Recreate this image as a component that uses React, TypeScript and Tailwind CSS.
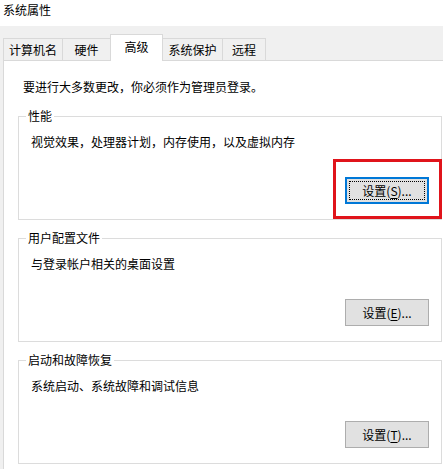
import { ReactNode } from "react";

type Tab = { label: string; width: string; active?: boolean };

const TABS: Tab[] = [
  { label: "计算机名", width: "w-[60px]" },
  { label: "硬件", width: "w-[49px]" },
  { label: "高级", width: "w-[53px]", active: true },
  { label: "系统保护", width: "w-[61px]" },
  { label: "远程", width: "w-[44px]" },
];

function TabStrip() {
  return (
    <div className="flex h-[34px] items-end pl-[3px]">
      {TABS.map((tab, i) =>
        tab.active ? (
          <div
            key={tab.label}
            className={`relative z-10 -mb-px -ml-px flex h-[27px] items-start justify-center border border-b-0 border-[#d9d9d9] bg-white pt-[3px] ${tab.width}`}
          >
            {tab.label}
          </div>
        ) : (
          <div
            key={tab.label}
            className={`flex h-[22px] items-center justify-center border border-b-0 border-[#d9d9d9] bg-[#f0f0f0] ${tab.width} ${
              i > 0 ? "-ml-px" : ""
            }`}
          >
            {tab.label}
          </div>
        )
      )}
    </div>
  );
}

function SettingsButton({
  accessKey,
  focused = false,
}: {
  accessKey: string;
  focused?: boolean;
}) {
  return (
    <div className="relative">
      <button
        className={
          focused
            ? "relative flex h-[27px] w-[84px] items-center justify-center border-2 border-[#0078d7] bg-[#e1e1e1]"
            : "relative flex h-[27px] w-[84px] items-center justify-center border border-[#adadad] bg-[#e1e1e1]"
        }
      >
        {focused ? (
          <span className="absolute inset-[2px] border border-dotted border-black" />
        ) : null}
        <span className="relative">
          设置(<span className="underline underline-offset-2">{accessKey}</span>)...
        </span>
      </button>
      {focused ? (
        // red annotation frame drawn over the screenshot
        <div className="pointer-events-none absolute left-[-12px] top-[-18px] h-[60px] w-[109px] border-[3px] border-[#e0141b]" />
      ) : null}
    </div>
  );
}

function GroupBox({
  title,
  children,
}: {
  title: string;
  children: ReactNode;
}) {
  return (
    <div className="relative flex h-[104px] w-[424px] flex-col border border-[#dcdcdc] pl-[12px] pr-[12px] pt-[17px]">
      <span className="absolute left-[7px] top-[-9px] bg-white px-[2px] leading-[16px]">
        {title}
      </span>
      {children}
    </div>
  );
}

function GroupContent({
  text,
  accessKey,
  focused,
}: {
  text: string;
  accessKey: string;
  focused?: boolean;
}) {
  return (
    <>
      <p className="leading-[16px]">{text}</p>
      <div className="mt-[27px] flex justify-end">
        <SettingsButton accessKey={accessKey} focused={focused} />
      </div>
    </>
  );
}

export default function App() {
  return (
    <div className="flex h-[469px] w-[443px] flex-col overflow-hidden bg-white font-['Noto_Sans_CJK_SC',sans-serif] text-[12px] text-black">
      <div className="h-[26px] shrink-0 pl-[3px] pt-[2px] leading-[16px]">
        系统属性
      </div>
      <div className="flex flex-1 flex-col bg-[#f0f0f0]">
        <TabStrip />
        <div className="ml-[3px] flex h-[420px] w-[442px] flex-col border border-[#d9d9d9] bg-white px-[14px]">
          <p className="ml-[5px] mt-[18px] leading-[16px]">
            要进行大多数更改，你必须作为管理员登录。
          </p>
          <div className="mt-[21px] flex flex-col gap-[18px]">
            <GroupBox title="性能">
              <GroupContent
                text="视觉效果，处理器计划，内存使用，以及虚拟内存"
                accessKey="S"
                focused
              />
            </GroupBox>
            <GroupBox title="用户配置文件">
              <GroupContent text="与登录帐户相关的桌面设置" accessKey="E" />
            </GroupBox>
            <GroupBox title="启动和故障恢复">
              <GroupContent text="系统启动、系统故障和调试信息" accessKey="T" />
            </GroupBox>
          </div>
        </div>
      </div>
    </div>
  );
}
